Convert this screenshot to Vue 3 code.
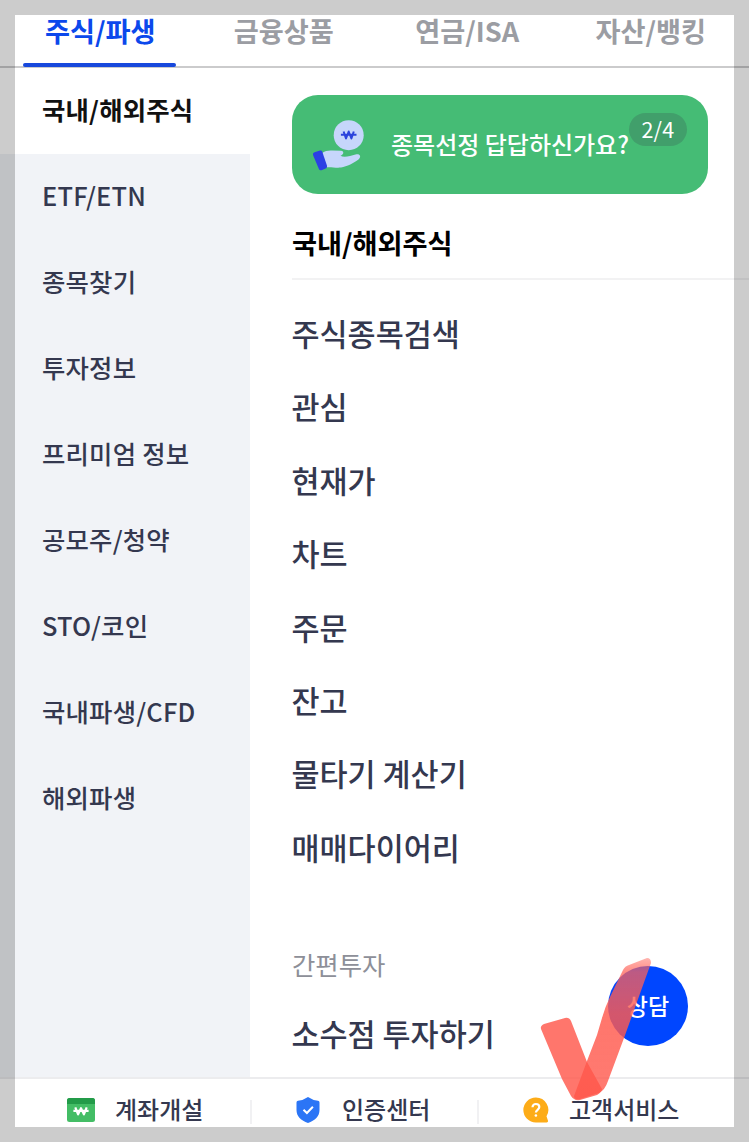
<script setup>
import { ref } from 'vue'

const tabs = ['주식/파생', '금융상품', '연금/ISA', '자산/뱅킹']
const activeTab = ref(0)

const categories = [
  '국내/해외주식',
  'ETF/ETN',
  '종목찾기',
  '투자정보',
  '프리미엄 정보',
  '공모주/청약',
  'STO/코인',
  '국내파생/CFD',
  '해외파생'
]
const activeCategory = ref(0)

const menus = ['주식종목검색', '관심', '현재가', '차트', '주문', '잔고', '물타기 계산기', '매매다이어리']
</script>

<template>
  <div class="screen">
    <nav class="tabs">
      <a
        v-for="(tab, i) in tabs"
        :key="tab"
        class="tab"
        :class="{ active: i === activeTab }"
        @click="activeTab = i"
      ><span>{{ tab }}</span></a>
    </nav>

    <div class="body">
      <aside class="side">
        <a
          v-for="(name, i) in categories"
          :key="name"
          class="category"
          :class="{ active: i === activeCategory }"
          @click="activeCategory = i"
        >{{ name }}</a>
      </aside>

      <main class="content">
        <div class="banner">
          <svg class="hand" width="54" height="54" viewBox="0 0 54 54">
            <circle cx="36.700" cy="17.200" r="15" fill="#c6d6fb" />
            <path d="M31.600 13.500l2.400 7 2.700-7 2.700 7 2.400-7M28.900 16.800h15.600" fill="none" stroke="#2b43dc" stroke-width="2" stroke-linejoin="round" />
            <path d="M9.500 35.500C13 32.600 17 32.300 20 32.500L29 32.700C32.500 33.200 31.800 36.500 28.500 37.800C30.500 39 34 39 38 38L43.500 36.500C47.800 35.300 49.800 38.500 46.500 41.500C42 45 35 48.500 29 49.600C24 50.200 18 48.800 14.500 49.500Z" fill="#c6d6fb" />
            <path d="M2.500 34.300L8 32.500Q9.600 32 10.200 33.500L15 47.800Q15.500 49.700 13.700 50.500L9.500 52.200Q7.700 52.800 7 51.200L1 37Q.4 35 2.500 34.300Z" fill="#2b40e4" />
          </svg>
          <span class="banner-text">종목선정 답답하신가요?</span>
          <span class="count">2/4</span>
        </div>

        <h2 class="title">국내/해외주식</h2>

        <ul class="menu">
          <li v-for="name in menus" :key="name">{{ name }}</li>
        </ul>

        <h3 class="subtitle">간편투자</h3>
        <ul class="menu simple">
          <li>소수점 투자하기</li>
        </ul>
      </main>
    </div>

    <footer class="bottom">
      <a class="shortcut">
        <svg width="28" height="24" viewBox="0 0 28 24">
          <rect width="28" height="24" rx="2.500" fill="#43bd65" />
          <path d="M0 6V2.500Q0 0 2.500 0H25.500Q28 0 28 2.500V6Z" fill="#239b49" />
          <path d="M8.300 9.400l2.800 7L14 10.200l2.900 6.200 2.800-7M6.400 12.800h15.200" fill="none" stroke="#fff" stroke-width="2.200" stroke-linejoin="round" />
        </svg>
        <span>계좌개설</span>
      </a>
      <a class="shortcut cert">
        <svg width="24" height="26" viewBox="0 0 24 26">
          <path d="M12 0Q16.500 3.200 22 3.700Q23.500 4 23.500 5.500V13C23.500 19.500 19 23.500 12 26C5 23.500.5 19.500.5 13V5.500Q.5 4 2 3.700Q7.500 3.200 12 0Z" fill="#2b75f6" />
          <path d="M7.500 12.800l3.400 3.200 6-6.200" fill="none" stroke="#fff" stroke-width="2" />
        </svg>
        <span>인증센터</span>
      </a>
      <a class="shortcut help">
        <svg width="26" height="26" viewBox="0 0 26 26">
          <path d="M12.800.5A12.400 12.400 0 0 1 23.500 19.300L25 23.800Q25.300 25.400 23.700 25.400H12.800A12.450 12.450 0 0 1 12.800.5Z" fill="#fdac18" />
          <path d="M9.500 10.200C9.500 5.900 16.300 6 16.300 10.100C16.300 12.800 12.900 12.800 12.900 15.500" fill="none" stroke="#fff" stroke-width="2.200" />
          <circle cx="12.900" cy="18.500" r="1.300" fill="#fff" />
        </svg>
        <span>고객서비스</span>
      </a>
    </footer>

    <button class="consult">상담</button>

    <!-- 형광펜 체크 표시 -->
    <svg class="check" width="120" height="150" viewBox="0 0 120 150">
      <defs>
        <linearGradient id="fade" x1="0" y1="1" x2="0" y2="0">
          <stop offset="0" stop-color="#ff5549" stop-opacity=".78" />
          <stop offset=".6" stop-color="#ff5a4e" stop-opacity=".83" />
          <stop offset=".9" stop-color="#ff6258" stop-opacity=".74" />
          <stop offset="1" stop-color="#ff6a60" stop-opacity=".5" />
        </linearGradient>
      </defs>
      <path d="M1 70Q0 67 4 65L25 59Q29 58 31 62L47 103L62 130Q62 133 57 136L40 141Q34 142 31 137L22 120Z" fill="#ff5a4e" fill-opacity=".83" />
      <path d="M34 137L47 102L57 76L62 59Q65 48 70 38L83 11Q85 7 89 6L107-1Q111-1 111 4L84 79L68 122Q65 131 59 134L40 140Q34 141 34 137Z" fill="url(#fade)" />
    </svg>

    <div class="frame"></div>
  </div>
</template>

<style>
body {
  margin: 0;
}
</style>

<style scoped>
* {
  margin: 0;
  padding: 0;
  box-sizing: border-box;
}

.screen {
  position: relative;
  display: flex;
  flex-direction: column;
  width: 749px;
  height: 1142px;
  overflow: hidden;
  background: #fff;
  color: #34384f;
  font-family: "Noto Sans CJK KR", sans-serif;
  font-weight: 500;
  white-space: nowrap;
}

/* 상단 탭 */
.tabs {
  display: flex;
  flex: none;
  height: 68px;
  padding-left: 8px;
  border-bottom: 2px solid #cbcbcc;
}
.tab {
  position: relative;
  display: flex;
  justify-content: center;
  flex: none;
  width: 183.500px;
  height: 67px;
  padding-left: 1px;
  color: #9b9da3;
  font-size: 27.200px;
  font-weight: 700;
  line-height: 60px;
}
.tab.active {
  color: #0b48ec;
}
.tab.active::after {
  content: "";
  position: absolute;
  left: 15px;
  bottom: 0;
  width: 153px;
  height: 4px;
  border-radius: 2px;
  background: #1748dc;
}

.body {
  display: flex;
  flex: 1;
  min-height: 0;
}

/* 왼쪽 분류 */
.side {
  flex: none;
  width: 250px;
  background: #f1f3f7;
}
.category {
  display: block;
  height: 86px;
  padding-left: 42px;
  font-size: 25.400px;
  letter-spacing: .2px;
  line-height: 82px;
}
.category.active {
  background: #fff;
  color: #111;
  font-weight: 700;
}

.content {
  flex: 1;
  padding: 27px 0 0 42px;
}

.banner {
  position: relative;
  display: flex;
  align-items: center;
  width: 416px;
  height: 99px;
  padding-left: 20px;
  border-radius: 26px;
  background: #45bc75;
  color: #fff;
}
.hand {
  flex: none;
}
.banner-text {
  margin-left: 25px;
  padding-bottom: 2px;
  font-size: 24px;
}
.count {
  position: absolute;
  top: 18px;
  right: 21px;
  width: 58px;
  height: 33px;
  border-radius: 17px;
  background: #419f6b;
  font-size: 21.500px;
  font-weight: 400;
  letter-spacing: .3px;
  line-height: 32px;
  text-align: center;
}

.title {
  height: 86px;
  padding-top: 20px;
  border-bottom: 2px solid #f2f2f3;
  color: #000;
  font-size: 27.200px;
  font-weight: 700;
  line-height: 57px;
}
.menu {
  padding-top: 17px;
  list-style: none;
}
.menu li {
  height: 73.400px;
  margin-left: -.5px;
  font-size: 30.500px;
  line-height: 73.400px;
}
.subtitle {
  margin-top: 50px;
  color: #8d8f98;
  font-size: 25.400px;
  font-weight: 400;
  line-height: 60px;
}
.menu.simple {
  padding-top: 3px;
}

/* 하단 바로가기 */
.bottom {
  display: flex;
  flex: none;
  height: 65px;
  border-top: 2px solid #ececee;
  background: #fff;
}
.shortcut {
  position: relative;
  display: flex;
  align-items: center;
  width: 251px;
  height: 62px;
  padding-left: 67px;
  font-size: 24px;
}
.shortcut span {
  margin-left: 20px;
  padding-bottom: 4px;
}
.shortcut.cert {
  width: 227px;
  padding-left: 45px;
}
.shortcut.cert span {
  margin-left: 22px;
}
.shortcut.help {
  padding-left: 45px;
}
.shortcut + .shortcut::before {
  content: "";
  position: absolute;
  top: 21px;
  left: -1px;
  width: 2px;
  height: 24px;
  background: #f1f1f3;
}

.consult {
  position: absolute;
  top: 966px;
  left: 608px;
  width: 80px;
  height: 80px;
  border: 0;
  border-radius: 50%;
  background: #0046ff;
  color: #fff;
  font: 500 23px/78px "Noto Sans CJK KR", sans-serif;
  padding-bottom: 2px;
}
.check {
  position: absolute;
  top: 959px;
  left: 540px;
  overflow: visible;
  filter: blur(.7px);
  pointer-events: none;
}
/* 화면 가장자리를 덮는 반투명 테두리 */
.frame {
  position: absolute;
  inset: 0;
  border: 15px solid rgba(0, 0, 0, .2);
  pointer-events: none;
}
</style>
